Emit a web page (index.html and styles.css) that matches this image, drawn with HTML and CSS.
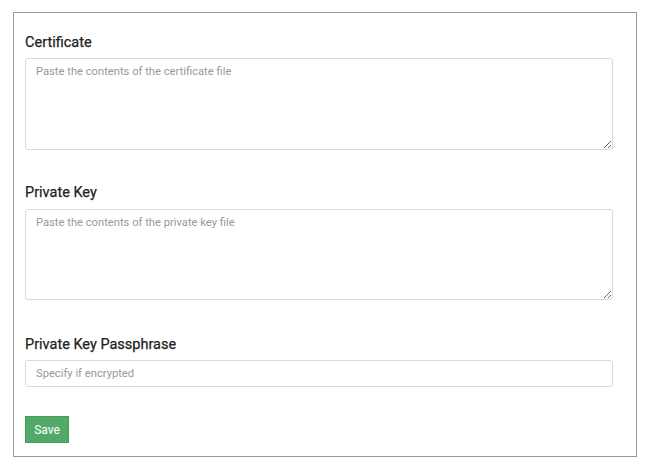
FILE: index.html
```html
<!DOCTYPE html>
<html>
<head>
<meta charset="utf-8">
<link rel="stylesheet" href="styles.css">
</head>
<body>
<div class="panel">
  <form class="form">
    <label class="label" for="cert">Certificate</label>
    <textarea id="cert" class="field area area-first" placeholder="Paste the contents of the certificate file"></textarea>
    <label class="label label-key" for="key">Private Key</label>
    <textarea id="key" class="field area area-second" placeholder="Paste the contents of the private key file"></textarea>
    <label class="label label-pass" for="pass">Private Key Passphrase</label>
    <input id="pass" class="field input" type="text" placeholder="Specify if encrypted">
    <button type="button" class="btn">Save</button>
  </form>
</div>
</body>
</html>
```
FILE: styles.css
```css
html, body {
  margin: 0;
  padding: 0;
  background: #fff;
}
body {
  font-family: Roboto, "Liberation Sans", sans-serif;
  color: #333;
}
.panel {
  box-sizing: border-box;
  margin: 12px 0 0 13px;
  width: 624px;
  height: 445px;
  border: 1px solid #9a9a9a;
  padding: 19px 0 0 11px;
}
.form {
  display: flex;
  flex-direction: column;
  align-items: flex-start;
  width: 588px;
}
.label {
  font-size: 14.5px;
  line-height: 20px;
  padding-top: 1px;
  font-weight: 400;
  color: #222;
  margin-bottom: 5px;
  -webkit-text-stroke: 0.25px #222;
}
.label-key {
  margin-top: 32px;
  margin-bottom: 6px;
}
.label-pass {
  margin-top: 34px;
}
.field {
  box-sizing: border-box;
  width: 588px;
  border: 1px solid #d9d9d9;
  border-radius: 3px;
  font-family: Roboto, "Liberation Sans", sans-serif;
  font-size: 11.2px;
  color: #555;
  background: #fff;
  margin: 0;
  outline: none;
}
.field::placeholder {
  color: #999;
  opacity: 1;
}
.area {
  padding: 5px 10px;
  line-height: 15px;
  resize: vertical;
}
.area-first {
  height: 92px;
}
.area-second {
  height: 91px;
}
.input {
  height: 27px;
  padding: 0 10px;
}
.btn {
  margin-top: 29px;
  width: 44px;
  height: 27px;
  padding: 0;
  border: 1px solid #439c58;
  border-radius: 0;
  background: #52aa68;
  color: #fff;
  font-family: Roboto, "Liberation Sans", sans-serif;
  font-size: 12px;
  font-weight: 400;
}
```
